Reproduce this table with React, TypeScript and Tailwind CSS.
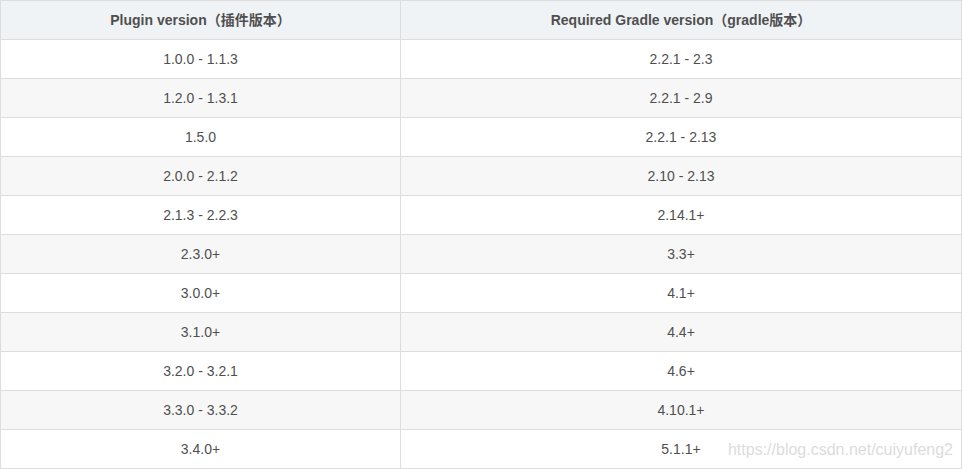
const rows: [string, string][] = [
  ['1.0.0 - 1.1.3', '2.2.1 - 2.3'],
  ['1.2.0 - 1.3.1', '2.2.1 - 2.9'],
  ['1.5.0', '2.2.1 - 2.13'],
  ['2.0.0 - 2.1.2', '2.10 - 2.13'],
  ['2.1.3 - 2.2.3', '2.14.1+'],
  ['2.3.0+', '3.3+'],
  ['3.0.0+', '4.1+'],
  ['3.1.0+', '4.4+'],
  ['3.2.0 - 3.2.1', '4.6+'],
  ['3.3.0 - 3.3.2', '4.10.1+'],
  ['3.4.0+', '5.1.1+'],
];

export default function App() {
  return (
    <div className="relative h-[469px] w-[963px] bg-white font-['Liberation_Sans','Noto_Sans_CJK_SC',sans-serif] text-[14px] text-[#4f4f4f]">
      <table className="w-[962px] table-fixed border-collapse">
        <colgroup>
          <col className="w-[400px]" />
          <col />
        </colgroup>
        <thead>
          <tr className="h-[39px] bg-[#eff3f5]">
            <th className="border border-[#dddddd] text-center font-bold text-[#4f4f4f]">Plugin version（插件版本）</th>
            <th className="border border-[#dddddd] text-center font-bold text-[#4f4f4f]">Required Gradle version（gradle版本）</th>
          </tr>
        </thead>
        <tbody>
          {rows.map(([plugin, gradle], i) => (
            <tr key={plugin} className={i % 2 === 1 ? 'h-[39px] bg-[#f7f7f7]' : 'h-[39px] bg-white'}>
              <td className="border border-[#dddddd] text-center">{plugin}</td>
              <td className="border border-[#dddddd] text-center">{gradle}</td>
            </tr>
          ))}
        </tbody>
      </table>
      <span className="absolute right-[10px] top-[440px] text-[16px] leading-[20px] text-[#dcdcdc]">https://blog.csdn.net/cuiyufeng2</span>
    </div>
  );
}
